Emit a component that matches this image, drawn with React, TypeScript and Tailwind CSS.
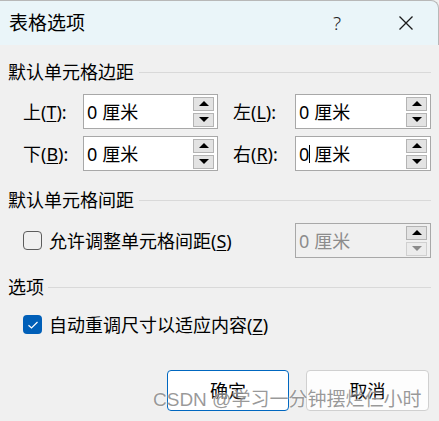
import React from 'react';

const font = "font-['Segoe_UI','Noto_Sans','Noto_Sans_CJK_SC',sans-serif]";

function Key({ k }: { k: string }) {
  return <span className="underline underline-offset-2 decoration-1">{k}</span>;
}

function Spinner({ disabled }: { disabled?: boolean }) {
  return (
    <div className="flex flex-col gap-[2px] w-[21px] mr-[3px]">
      <div className="h-[14px] bg-[#e3e3e3] border border-[#b4b4b4] flex items-center justify-center">
        <div className="w-0 h-0 border-l-[5px] border-r-[5px] border-b-[5px] border-l-transparent border-r-transparent border-b-black" />
      </div>
      <div
        className={
          disabled
            ? 'h-[14px] bg-[#ececec] border border-[#d0d0d0] flex items-center justify-center'
            : 'h-[14px] bg-[#e3e3e3] border border-[#b4b4b4] flex items-center justify-center'
        }
      >
        <div
          className={
            disabled
              ? 'w-0 h-0 border-l-[5px] border-r-[5px] border-t-[5px] border-l-transparent border-r-transparent border-t-[#8a8a8a]'
              : 'w-0 h-0 border-l-[5px] border-r-[5px] border-t-[5px] border-l-transparent border-r-transparent border-t-black'
          }
        />
      </div>
    </div>
  );
}

function NumberBox({ w, cursor, disabled }: { w: string; cursor?: boolean; disabled?: boolean }) {
  return (
    <div
      className={
        (disabled ? 'bg-[#f0f0f0] text-[#8c8c8c] ' : 'bg-white text-black ') +
        w +
        ' h-[35px] border border-[#a8a8a8] flex items-center justify-between'
      }
    >
      <div className="pl-[3px] text-[18px] leading-none flex items-center">
        <span>0</span>
        {cursor && <span className="w-px h-[18px] bg-black" />}
        <span className={cursor ? 'ml-[4px]' : 'ml-[5px]'}>厘米</span>
      </div>
      <Spinner disabled={disabled} />
    </div>
  );
}

function Section({ title, indent }: { title: string; indent?: boolean }) {
  return (
    <div className="flex items-center h-[24px] pr-[8px]">
      <span className="text-[18px] leading-none">{title}</span>
      <div className={(indent ? 'ml-[4px]' : 'ml-[5px]') + ' flex-1 h-px bg-[#d9d9d9]'} />
    </div>
  );
}

export default function App() {
  return (
    <div className={font + ' relative w-[439px] h-[421px] overflow-hidden bg-[#f0f0f0] text-black'}>
      <div className="h-[45px] bg-[#eaf5f9] border-t border-r border-[#b8b8b8] rounded-tr-[8px] flex items-center pl-[9px]">
        <span className="text-[19px] leading-none">表格选项</span>
        <span className="ml-auto text-[19px] leading-none text-[#222] font-light">?</span>
        <svg className="ml-[57px] mr-[24px]" width="16" height="16" viewBox="0 0 16 16">
          <path d="M1.5 1.5 L14.5 14.5 M14.5 1.5 L1.5 14.5" stroke="#1a1a1a" strokeWidth="1.3" />
        </svg>
      </div>

      <div className="pl-[8px] pt-[15px]">
        <Section title="默认单元格边距" />

        <div className="mt-[10px] flex flex-col gap-[7px]">
          <div className="flex items-center">
            <span className="ml-[15px] w-[60px] text-[18px] leading-none">
              上(<Key k="T" />):
            </span>
            <NumberBox w="w-[135px]" />
            <span className="ml-[15px] w-[62px] text-[18px] leading-none">
              左(<Key k="L" />):
            </span>
            <NumberBox w="w-[136px]" />
          </div>
          <div className="flex items-center">
            <span className="ml-[15px] w-[60px] text-[18px] leading-none">
              下(<Key k="B" />):
            </span>
            <NumberBox w="w-[135px]" />
            <span className="ml-[15px] w-[62px] text-[18px] leading-none">
              右(<Key k="R" />):
            </span>
            <NumberBox w="w-[136px]" cursor />
          </div>
        </div>

        <div className="mt-[17px]">
          <Section title="默认单元格间距" />
        </div>

        <div className="mt-[11px] flex items-center">
          <div className="ml-[15px] w-[19px] h-[19px] rounded-[4px] border border-[#5c5c5c]" />
          <span className="ml-[7px] w-[246px] text-[18px] leading-none">
            允许调整单元格间距(<Key k="S" />)
          </span>
          <NumberBox w="w-[136px]" disabled />
        </div>

        <div className="mt-[17px]">
          <Section title="选项" indent />
        </div>

        <div className="mt-[16px] flex items-center h-[19px]">
          <div className="ml-[15px] w-[19px] h-[19px] rounded-[4px] bg-[#005fb8] flex items-center justify-center">
            <svg width="12" height="10" viewBox="0 0 12 10">
              <path d="M1.5 5.2 L4.5 8 L10.5 2" fill="none" stroke="white" strokeWidth="1.2" />
            </svg>
          </div>
          <span className="ml-[7px] text-[18px] leading-none">
            自动重调尺寸以适应内容(<Key k="Z" />)
          </span>
        </div>

        <div className="mt-[36px] flex pl-[159px] gap-[17px]">
          <button className="w-[122px] h-[41px] bg-white border border-[#0067c0] rounded-[4px] text-[18px] leading-none">
            确定
          </button>
          <button className="w-[123px] h-[41px] bg-[#fdfdfd] border border-[#d0d0d0] rounded-[4px] text-[18px] leading-none">
            取消
          </button>
        </div>
      </div>

      <div className="absolute left-[153px] top-[390px] text-[19px] leading-none text-[rgba(120,120,120,0.75)] [text-shadow:0_0_2px_#fff] font-['Liberation_Sans','Noto_Sans_CJK_SC',sans-serif] whitespace-nowrap">
        CSDN @学习一分钟摆烂仨小时
      </div>
    </div>
  );
}
